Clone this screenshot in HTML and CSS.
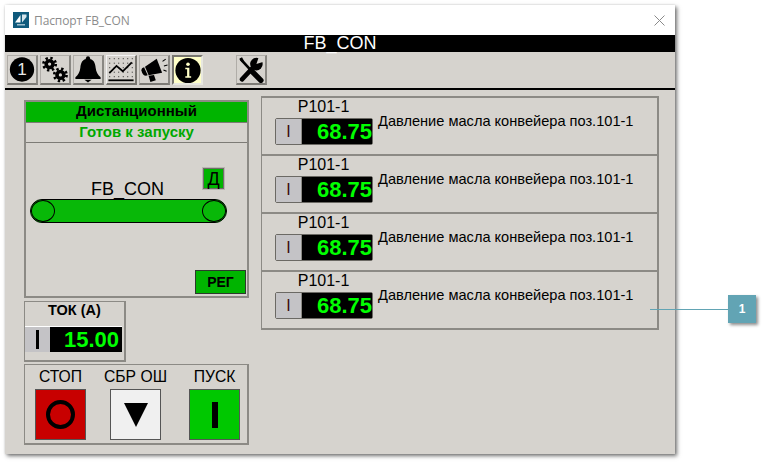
FILE: index.html
```html
<!DOCTYPE html>
<html lang="en">
<head>
    <meta charset="UTF-8">
    <title>Паспорт FB_CON</title>
    <link rel="stylesheet" href="styles.css">
</head>
<body>
    <div class="window">
        <div class="titlebar">
            <svg class="app-icon" viewBox="0 0 16 16">
                <rect width="16" height="16" fill="#0f5a7c"/>
                <path d="M2 10.500 L7.500 3 L7.500 10.500 Z" fill="#fff"/>
                <path d="M9 2.500 L13.500 2.500 L13.500 5 L9 10.500 Z" fill="#d5e5ec"/>
                <rect x="4" y="12" width="8" height="1.500" fill="#9fc0cf"/>
            </svg>
            <span class="title-text">Паспорт FB_CON</span>
            <svg class="close-icon" viewBox="0 0 11 11">
                <path d="M0.500 0.500 L10.500 10.500 M10.500 0.500 L0.500 10.500" stroke="#8a8a8a" stroke-width="1" fill="none"/>
            </svg>
        </div>
        <div class="head">FB_CON</div>

        <!-- toolbar -->
        <div class="toolbar">
            <div class="tool">
                <svg viewBox="0 0 30 30">
                    <circle cx="15" cy="15" r="13.500" fill="#000"/>
                    <text x="15" y="21.500" text-anchor="middle" class="tool-num">1</text>
                </svg>
            </div>
            <div class="tool">
                <svg viewBox="0 0 30 30">
                    <circle cx="9" cy="9" r="3.800" fill="none" stroke="#000" stroke-width="4"/>
                    <circle cx="9" cy="9" r="6.800" fill="none" stroke="#000" stroke-width="3" stroke-dasharray="2.600 2.740"/>
                    <circle cx="21" cy="21" r="3.800" fill="none" stroke="#000" stroke-width="4"/>
                    <circle cx="21" cy="21" r="6.800" fill="none" stroke="#000" stroke-width="3" stroke-dasharray="2.600 2.740"/>
                </svg>
            </div>
            <div class="tool">
                <svg viewBox="0 0 30 30">
                    <circle cx="15" cy="2.500" r="2.300" fill="#000"/>
                    <path d="M15 3 C8.500 3 7 8 6.500 13 C6 18 4 21 1 23.500 L1 25.500 L29 25.500 L29 23.500 C26 21 24 18 23.500 13 C23 8 21.500 3 15 3 Z" fill="#000"/>
                    <path d="M11 26.500 L19 26.500 L15 29.500 Z" fill="#000"/>
                </svg>
            </div>
            <div class="tool tool-raised">
                <svg viewBox="0 0 30 30">
                    <path d="M2 3 H28 M2 8 H28 M2 13 H28 M2 18 H28 M2 23 H28" stroke="#000" stroke-width="1" stroke-dasharray="1 4" fill="none"/>
                    <path d="M2 19 L10 11 L17 17 L27 7" stroke="#000" stroke-width="2" fill="none"/>
                    <path d="M1 27 H29" stroke="#000" stroke-width="2"/>
                </svg>
            </div>
            <div class="tool">
                <svg viewBox="0 0 30 30">
                    <path d="M1 16 C1 14 2 13 4 12.500 L8 21.500 C5 23 2 21 1 16 Z" fill="#000"/>
                    <path d="M5 12 L18 3 L24 18.500 L9 21.500 Z" fill="#000"/>
                    <path d="M9 22 L15 21 L17 27 L11 29 Z" fill="#000"/>
                    <path d="M24.500 6 L28 3.500 M26 11 L30 10 M25.500 15.500 L29 17" stroke="#000" stroke-width="1.200" fill="none"/>
                </svg>
            </div>
            <div class="tool tool-active">
                <svg viewBox="0 0 30 30">
                    <circle cx="15" cy="15" r="14" fill="#000"/>
                    <circle cx="15" cy="8" r="2" fill="#ffffc8"/>
                    <path d="M12 12 H16.500 V21.500 H18.500 V23 H12 V21.500 H14 V13.500 H12 Z" fill="#ffffc8"/>
                </svg>
            </div>
            <div class="tool tool-last">
                <svg viewBox="0 0 30 30">
                    <path d="M4 4 L15 16" stroke="#000" stroke-width="3" stroke-linecap="round"/>
                    <path d="M2 3 L5 1.500 L7 5 L5 7 Z" fill="#000"/>
                    <path d="M15 16 L26 27" stroke="#000" stroke-width="6" stroke-linecap="round"/>
                    <path d="M5 26 L19 11" stroke="#000" stroke-width="5" stroke-linecap="round"/>
                    <circle cx="21" cy="9" r="7" fill="#000"/>
                    <path d="M21 9 L24 0 L30 6 Z" fill="#d6d3ce"/>
                </svg>
            </div>
        </div>

        <div class="content">
            <div class="left">
                <div class="panel unit">
                    <div class="mode">Дистанционный</div>
                    <div class="state">Готов к запуску</div>
                    <div class="unit-body">
                        <div class="unit-top">
                            <span class="unit-name">FB_CON</span>
                            <span class="badge-d">Д</span>
                        </div>
                        <div class="conveyor">
                            <span class="roller"></span>
                            <span class="roller"></span>
                        </div>
                        <div class="reg">РЕГ</div>
                    </div>
                </div>

                <div class="panel current">
                    <div class="current-title">ТОК (А)</div>
                    <div class="current-meter">
                        <span class="current-btn"><i class="bar"></i></span>
                        <span class="current-val">15.00</span>
                    </div>
                </div>

                <div class="panel controls">
                    <div class="control">
                        <span class="control-label">СТОП</span>
                        <div class="cbtn cbtn-stop"><span class="ring"></span></div>
                    </div>
                    <div class="control">
                        <span class="control-label">СБР ОШ</span>
                        <div class="cbtn cbtn-reset"><span class="tri"></span></div>
                    </div>
                    <div class="control">
                        <span class="control-label">ПУСК</span>
                        <div class="cbtn cbtn-start"><span class="stick"></span></div>
                    </div>
                </div>
            </div>

            <div class="right">
                <div class="row">
                    <div class="param">
                        <span class="param-name">P101-1</span>
                        <div class="meter"><span class="meter-btn">I</span><span class="meter-val">68.75</span></div>
                    </div>
                    <span class="param-desc">Давление масла конвейера поз.101-1</span>
                </div>
                <div class="row">
                    <div class="param">
                        <span class="param-name">P101-1</span>
                        <div class="meter"><span class="meter-btn">I</span><span class="meter-val">68.75</span></div>
                    </div>
                    <span class="param-desc">Давление масла конвейера поз.101-1</span>
                </div>
                <div class="row">
                    <div class="param">
                        <span class="param-name">P101-1</span>
                        <div class="meter"><span class="meter-btn">I</span><span class="meter-val">68.75</span></div>
                    </div>
                    <span class="param-desc">Давление масла конвейера поз.101-1</span>
                </div>
                <div class="row">
                    <div class="param">
                        <span class="param-name">P101-1</span>
                        <div class="meter"><span class="meter-btn">I</span><span class="meter-val">68.75</span></div>
                    </div>
                    <span class="param-desc">Давление масла конвейера поз.101-1</span>
                </div>
            </div>
        </div>
    </div>

    <!-- callout -->
    <div class="callout-line"></div>
    <div class="callout">1</div>
</body>
</html>
```

FILE: styles.css
```css
* {
    margin: 0;
    padding: 0;
    box-sizing: border-box;
}

body {
    width: 767px;
    height: 463px;
    background: #fff;
    overflow: hidden;
    position: relative;
    font-family: "Liberation Sans", Arial, sans-serif;
    color: #000;
    padding: 5px 0 0 5px;
}

.window {
    width: 670px;
    height: 449px;
    background: #d6d3ce;
    box-shadow: 2px 2px 4px rgba(0, 0, 0, 0.55), 0 0 2px rgba(0, 0, 0, 0.12);
}

.titlebar {
    height: 30px;
    background: #fff;
    display: flex;
    align-items: center;
    padding: 0 10px 0 8px;
}

.app-icon {
    width: 16px;
    height: 16px;
}

.title-text {
    margin-left: 5px;
    font-family: "Open Sans", sans-serif;
    font-size: 12px;
    letter-spacing: -0.1px;
    color: #8c8c8c;
}

.close-icon {
    width: 11px;
    height: 11px;
    margin-left: auto;
}

.head {
    height: 17px;
    background: #000;
    color: #fff;
    font-size: 18px;
    line-height: 17px;
    text-align: center;
}

.toolbar {
    height: 38px;
    border-bottom: 2px solid #000;
    display: flex;
    gap: 2px;
    padding: 3px 0 0 2px;
}

.tool {
    width: 31px;
    height: 30px;
    background: #d6d3ce;
    border: 1px solid #b0ada8;
    border-right: 2px solid #8a8883;
    border-bottom: 2px solid #7d7b76;
}

.tool svg {
    display: block;
    width: 28px;
    height: 27px;
}

.tool-num {
    font-family: "Liberation Sans", sans-serif;
    font-size: 19px;
    fill: #e8e8e8;
}

.tool-raised {
    border-color: #f2f2f2 #77756f #77756f #f2f2f2;
}

.tool-active {
    background: #ffffc8;
    border: 2px solid #77756f;
    border-right-color: #e8e8e0;
    border-bottom-color: #e8e8e0;
}

.tool-last {
    margin-left: 31px;
}

.content {
    display: flex;
    padding: 7px 16px 0 19px;
    gap: 12px;
}

.left {
    width: 225px;
    display: flex;
    flex-direction: column;
    padding-top: 3px;
}

.panel {
    border: 1px solid #8c8a85;
    border-width: 1px 2px 2px 1px;
}

.unit {
    height: 198px;
    display: flex;
    flex-direction: column;
    border-width: 2px;
}

.mode {
    height: 21px;
    background: #00b400;
    border-bottom: 1px solid #7d7b76;
    text-align: center;
    font-size: 15px;
    font-weight: bold;
    line-height: 18px;
}

.state {
    height: 20px;
    border-bottom: 1px solid #7d7b76;
    text-align: center;
    font-size: 15px;
    font-weight: bold;
    line-height: 17px;
    color: #00a800;
}

.unit-body {
    flex: 1;
    display: flex;
    flex-direction: column;
    padding: 24px 1px 2px 4px;
}

.unit-top {
    height: 32px;
    display: flex;
    padding-right: 22px;
}

.unit-name {
    margin-left: 61px;
    margin-top: 12px;
    font-size: 18px;
    line-height: 20px;
    position: relative;
    z-index: 1;
}

.badge-d {
    width: 21px;
    height: 21px;
    margin-left: auto;
    margin-top: 1px;
    background: #00b400;
    border: 1px solid #6f6d68;
    outline: 1px solid #b8b6b1;
    text-align: center;
    font-size: 18px;
    line-height: 20px;
}

.conveyor {
    width: 197px;
    height: 24px;
    background: #08b808;
    border: 1px solid #000;
    border-radius: 12px;
    display: flex;
    justify-content: space-between;
    overflow: hidden;
}

.roller {
    width: 24px;
    height: 22px;
    border-radius: 50%;
    border: 1px solid #000;
}

.reg {
    width: 51px;
    height: 24px;
    margin-top: auto;
    align-self: flex-end;
    background: #00b400;
    border: 1px solid #2c3a2c;
    text-align: center;
    font-size: 14px;
    font-weight: bold;
    line-height: 23px;
}

.current {
    width: 102px;
    height: 61px;
    margin-top: 3px;
}

.current-title {
    text-align: center;
    font-size: 14.500px;
    font-weight: bold;
    line-height: 16px;
    height: 18px;
}

.current-meter {
    display: flex;
    height: 26px;
    width: 97px;
    border-top: 1px solid #fff;
    margin-top: 6px;
}

.current-btn {
    width: 25px;
    background: #c4c3c6;
    display: flex;
    justify-content: center;
    align-items: center;
}

.bar {
    width: 3px;
    height: 19px;
    background: #000;
}

.current-val {
    flex: 1;
    background: #000;
    color: #00ff00;
    font-size: 22px;
    font-weight: bold;
    text-align: right;
    line-height: 25px;
    padding-right: 3px;
}

.controls {
    height: 81px;
    margin-top: 2px;
    display: flex;
    padding: 3px 0 0 10px;
    gap: 24px;
}

.control {
    width: 51px;
    display: flex;
    flex-direction: column;
    align-items: center;
}

.control:last-child {
    margin-left: 4px;
}

.control-label {
    font-size: 15.700px;
    line-height: 18px;
    height: 21px;
    white-space: nowrap;
}

.cbtn {
    width: 51px;
    height: 51px;
    border: 1px solid #555;
    display: flex;
    justify-content: center;
    align-items: center;
}

.cbtn-stop {
    background: #c80000;
}

.cbtn-reset {
    background: #f0f0f0;
}

.cbtn-start {
    background: #00c800;
}

.ring {
    width: 29px;
    height: 29px;
    border: 4px solid #000;
    border-radius: 50%;
}

.tri {
    width: 0;
    height: 0;
    border-left: 12px solid transparent;
    border-right: 12px solid transparent;
    border-top: 24px solid #000;
}

.stick {
    width: 6px;
    height: 26px;
    background: #000;
}

.right {
    width: 398px;
    display: flex;
    flex-direction: column;
    margin-top: -1px;
}

.row {
    height: 58px;
    border: 1px solid #8c8a85;
    border-width: 2px 2px 0 1px;
    display: flex;
    padding-left: 13px;
}

.row:last-child {
    height: 60px;
    border-bottom-width: 2px;
}

.param {
    width: 98px;
    display: flex;
    flex-direction: column;
}

.param-name {
    font-size: 16px;
    line-height: 18px;
    text-align: center;
    padding-right: 1px;
    height: 20px;
}

.meter {
    height: 27px;
    display: flex;
    border: 1px solid #6b6964;
    border-radius: 2px;
}

.meter-btn {
    width: 26px;
    background: #c4c3c6;
    border-right: 1px solid #8c8a85;
    text-align: center;
    font-size: 16px;
    line-height: 25px;
    color: #3a0a0a;
}

.meter-val {
    flex: 1;
    background: #000;
    color: #00ff00;
    font-size: 22px;
    font-weight: bold;
    text-align: right;
    line-height: 25px;
}

.param-desc {
    margin-left: 5px;
    margin-top: 14px;
    font-size: 14.600px;
    line-height: 18px;
    white-space: nowrap;
}

.callout-line {
    position: absolute;
    left: 650px;
    top: 309px;
    width: 78px;
    height: 1px;
    background: #62a4b4;
}

.callout {
    position: absolute;
    left: 728px;
    top: 295px;
    width: 28px;
    height: 28px;
    background: #62a4b4;
    box-shadow: 2px 2px 3px rgba(0, 0, 0, 0.45);
    color: #fff;
    font-size: 12px;
    font-weight: bold;
    text-align: center;
    line-height: 28px;
}
```
